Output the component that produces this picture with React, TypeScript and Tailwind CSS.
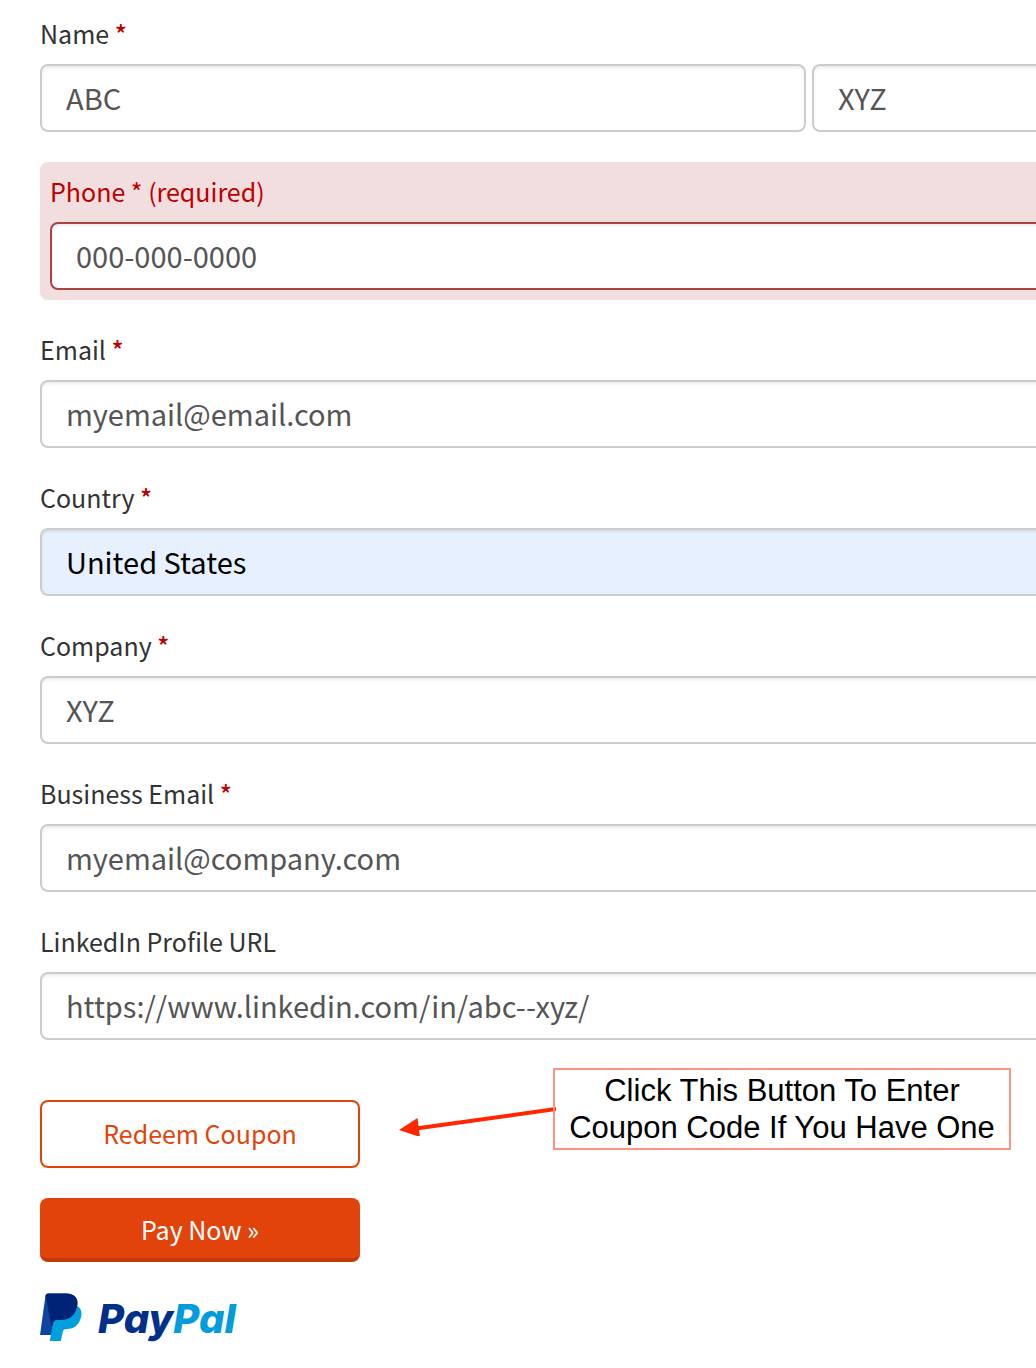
import type { ComponentProps, ReactNode } from 'react'
import { clsx } from 'clsx'

interface TextInputProps extends ComponentProps<'input'> {
  invalid?: boolean
  autofilled?: boolean
}

function TextInput({ invalid, autofilled, ...props }: TextInputProps) {
  return (
    <input
      type="text"
      className={clsx(
        'h-17 w-full min-w-0 rounded-lg border-2 px-6 pb-0.5 text-[29px] shadow-[inset_0_2px_3px_rgba(0,0,0,0.08)] outline-none',
        invalid ? 'border-[#a94442]' : 'border-[#ccc]',
        autofilled ? 'bg-[#e6f0ff] text-black' : 'bg-white text-[#555]'
      )}
      {...props}
    />
  )
}

interface FieldProps {
  id: string
  label: string
  required?: boolean
  invalid?: boolean
  children: ReactNode
}

function Field({ id, label, required, invalid, children }: FieldProps) {
  return (
    <div className={clsx(invalid && 'rounded-lg bg-[#f2dede] p-[10px]')}>
      <label
        htmlFor={id}
        className={clsx('mb-3 block text-[25px] leading-[38px]', invalid ? 'text-[#b00]' : 'text-[#333]')}
      >
        {label}
        {required && <span className={clsx('text-[#b00]', !invalid && 'font-medium')}> *</span>}
        {invalid && ' (required)'}
      </label>
      {children}
    </div>
  )
}

function Arrow() {
  return (
    <svg width="160" height="36" viewBox="0 0 160 36" className="mt-8 shrink-0" aria-hidden="true">
      <path d="M20 28.500 L160 9" stroke="#ff2600" strokeWidth="4" />
      <path d="M3 30 L21.500 18 L24 37 Z" fill="#ff2600" />
    </svg>
  )
}

function PayPalLogo() {
  return (
    <div className="flex items-center gap-4" role="img" aria-label="PayPal">
      <svg width="42" height="48" viewBox="0 0 42 48" aria-hidden="true">
        <path d="M5.500 2.500 Q6 0.500 8 0.500 H26 C35 0.500 39 6 37 13 L20 34 H13 L11.500 42 H0 Z" fill="#0d45a0" />
        <path d="M37.500 13 C41.500 15.500 42.500 21 40.500 26 C38 33 33 36 27 36 Q23.500 36 23 38 L20.800 48 H9.800 L13.500 27 Z" fill="#00a0de" />
        <path d="M5.500 2.500 Q6 0.500 8 0.500 H26 C35 0.500 39 6 37 14 C35 22 30 27 21 27 H17 C14.500 27 13.500 28.500 13 31 L11.500 34 Z" fill="#012377" />
      </svg>
      <span className="pt-1 font-['Inter',sans-serif] text-[40px] leading-11 font-extrabold text-[#003087] italic">
        Pay<span className="text-[#009cde]">Pal</span>
      </span>
    </div>
  )
}

export default function App() {
  return (
    <main className="overflow-hidden bg-white pt-[14px] pl-10 font-['Noto_Sans_CJK_SC',sans-serif]">
      <form className="-mr-[542px]" onSubmit={(e) => e.preventDefault()}>
        <div className="flex flex-col gap-[30px]">
          <Field id="first-name" label="Name" required>
            <div className="flex gap-[6px]">
              <TextInput id="first-name" defaultValue="ABC" />
              <TextInput aria-label="Last name" defaultValue="XYZ" />
            </div>
          </Field>
          <Field id="phone" label="Phone" required invalid>
            <TextInput id="phone" type="tel" defaultValue="000-000-0000" invalid />
          </Field>
          <Field id="email" label="Email" required>
            <TextInput id="email" type="email" defaultValue="myemail@email.com" />
          </Field>
          <Field id="country" label="Country" required>
            <TextInput id="country" defaultValue="United States" autofilled />
          </Field>
          <Field id="company" label="Company" required>
            <TextInput id="company" defaultValue="XYZ" />
          </Field>
          <Field id="business-email" label="Business Email" required>
            <TextInput id="business-email" type="email" defaultValue="myemail@company.com" />
          </Field>
          <Field id="linkedin" label="LinkedIn Profile URL">
            <TextInput id="linkedin" type="url" defaultValue="https://www.linkedin.com/in/abc--xyz/" />
          </Field>
        </div>

        <div className="flex items-start pt-7">
          <button
            type="button"
            className="mt-8 h-17 w-80 shrink-0 rounded-lg border-2 border-[#e1430a] bg-white text-[25px] text-[#e1430a]"
          >
            Redeem Coupon
          </button>
          <div className="ml-9 flex items-start">
            <Arrow />
            <p className="-ml-[3px] w-[458px] border-2 border-[#ff9385] py-0.5 text-center font-['Liberation_Sans',sans-serif] text-[31px] leading-[37px] text-black">
              Click This Button To Enter Coupon Code If You Have One
            </p>
          </div>
        </div>

        <button
          type="submit"
          className="mt-[30px] block h-16 w-80 rounded-lg border-b-4 border-[#c0390b] bg-[#e1430a] pt-1 text-[25px] text-white"
        >
          Pay Now »
        </button>
      </form>

      <div className="pt-[31px] pb-7">
        <PayPalLogo />
      </div>
    </main>
  )
}
